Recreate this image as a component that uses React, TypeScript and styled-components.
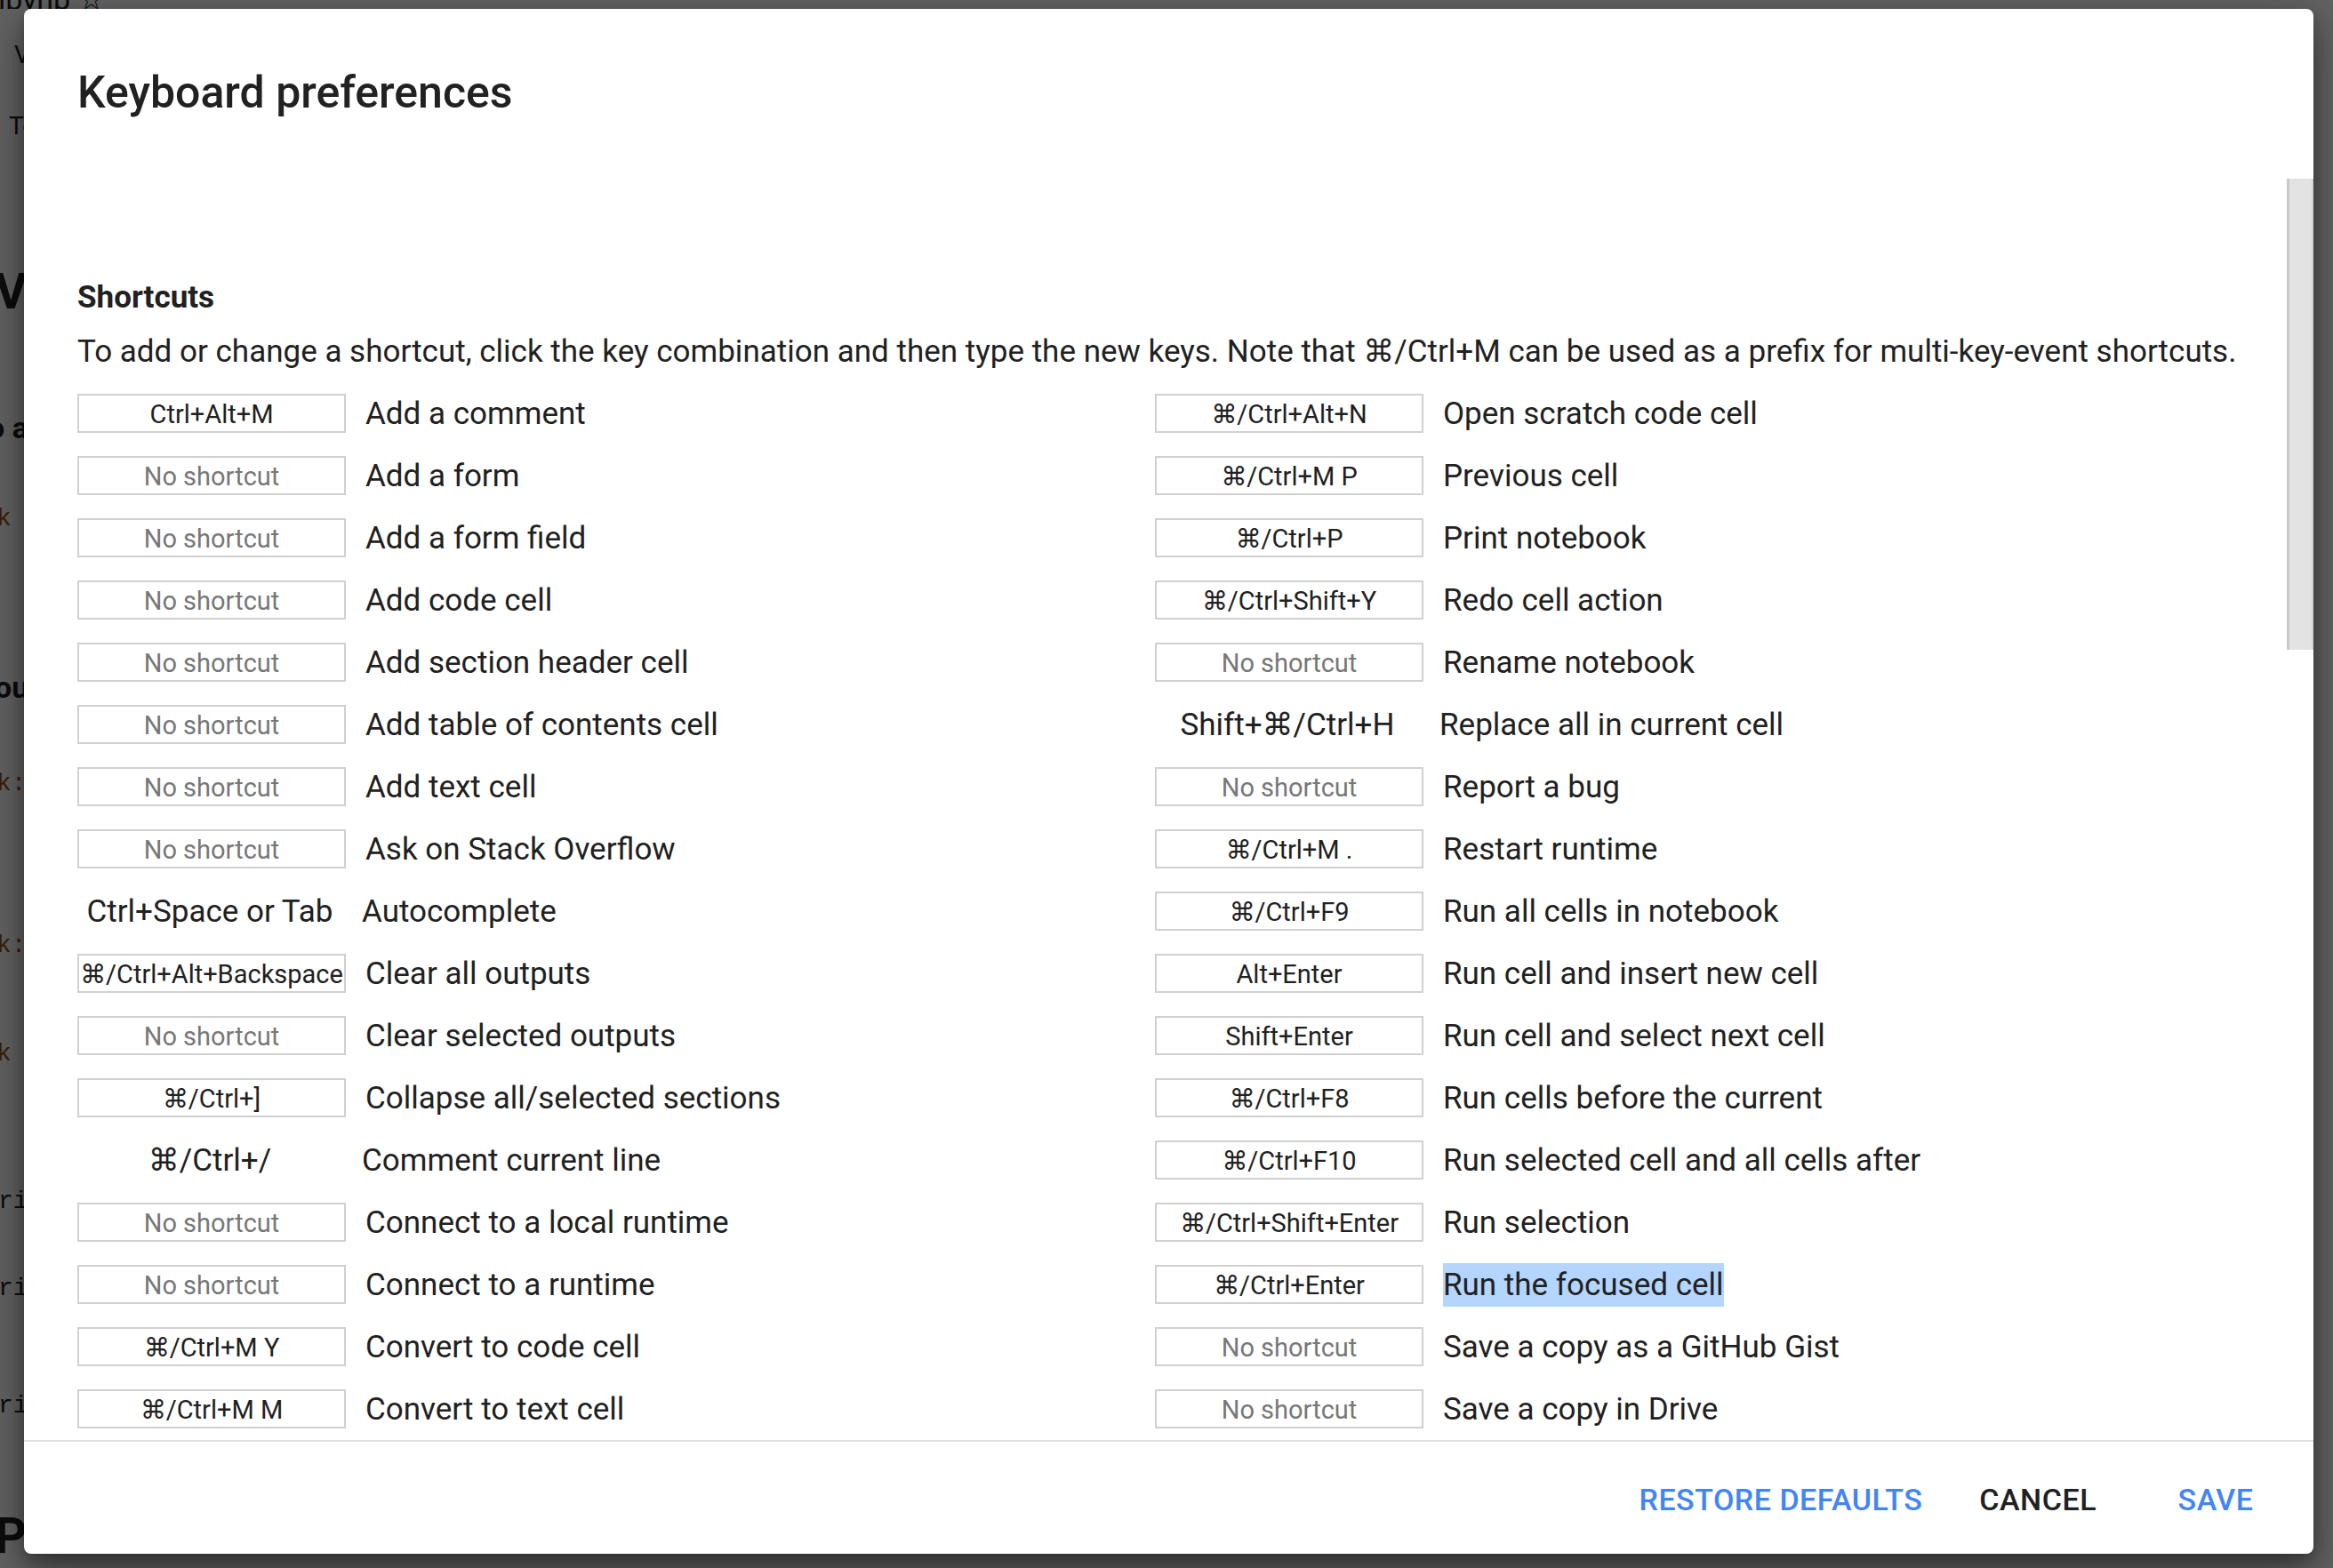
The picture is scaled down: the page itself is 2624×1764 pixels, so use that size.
import React from "react";
import styled, { createGlobalStyle } from "styled-components";

const GlobalStyle = createGlobalStyle`
  html, body {
    margin: 0;
    padding: 0;
  }
  body {
    width: 2624px;
    height: 1764px;
    overflow: hidden;
    font-family: Roboto, "DejaVu Sans", sans-serif;
  }
`;

const Screen = styled.div`
  position: relative;
  width: 2624px;
  height: 1764px;
  overflow: hidden;
  background: #ffffff;
`;

// the notebook that sits behind the dimmed backdrop; only slivers show
const NotebookPage = styled.div`
  display: flex;
  flex-direction: column;
`;

const TopStrip = styled.div`
  height: 10px;
  overflow: hidden;
`;

const SideStrip = styled.div`
  width: 27px;
  padding-top: 38px;
  overflow: hidden;
  display: flex;
  flex-direction: column;
`;

const PageLine = styled.div<{
  $h: number;
  $x: number;
  $size: number;
  $bold?: boolean;
  $mono?: boolean;
  $tint?: string;
}>`
  flex-shrink: 0;
  height: ${(p) => p.$h}px;
  margin-left: ${(p) => p.$x}px;
  font-family: ${(p) =>
    p.$mono ? '"Liberation Mono", monospace' : 'Roboto, "DejaVu Sans", sans-serif'};
  font-size: ${(p) => p.$size}px;
  font-weight: ${(p) => (p.$bold ? 700 : 400)};
  line-height: ${(p) => p.$size}px;
  color: ${(p) => p.$tint || "#202124"};
  white-space: nowrap;
`;

const FileName = styled.div`
  margin: -18px 0 0 -2px;
  font-size: 34px;
  line-height: 34px;
  color: #202124;
  white-space: nowrap;
`;

const Backdrop = styled.div`
  position: absolute;
  inset: 0;
  background: rgba(0, 0, 0, 0.62);
  display: flex;
  align-items: flex-start;
  padding: 10px 0 0 27px;
  box-sizing: border-box;
`;

const Dialog = styled.div`
  width: 2575px;
  height: 1738px;
  background: #ffffff;
  border-radius: 8px;
  display: flex;
  flex-direction: column;
  overflow: hidden;
  box-shadow: 0 18px 44px rgba(0, 0, 0, 0.45), 0 6px 14px rgba(0, 0, 0, 0.2);
`;

const Header = styled.div`
  flex-shrink: 0;
  height: 191px;
  padding: 64px 60px 0;
  box-sizing: border-box;
`;

const Title = styled.h1`
  margin: 0;
  font-size: 50px;
  font-weight: 500;
  line-height: 1.2;
  color: #212121;
`;

const Body = styled.div`
  position: relative;
  flex: 1;
  overflow: hidden;
  padding: 113px 91px 0 60px;
`;

const SectionTitle = styled.h2`
  margin: 0;
  font-size: 35px;
  font-weight: 700;
  line-height: 1.2;
  color: #212121;
`;

const Intro = styled.p`
  margin: 19px 0 13px;
  font-size: 35px;
  line-height: 1.2;
  color: #212121;
  white-space: nowrap;
`;

const Columns = styled.div`
  display: grid;
  grid-template-columns: 1fr 1fr;
`;

const ShortcutList = styled.div`
  display: flex;
  flex-direction: column;
`;

const Row = styled.div`
  height: 70px;
  display: flex;
  align-items: center;
`;

const KeyBox = styled.div<{ $empty?: boolean }>`
  box-sizing: border-box;
  width: 302px;
  height: 44px;
  flex-shrink: 0;
  border: 2px solid #d0d0d0;
  display: flex;
  align-items: center;
  justify-content: center;
  padding-top: 2px;
  font-size: 29px;
  color: ${(p) => (p.$empty ? "#777777" : "#212121")};
  white-space: nowrap;
`;

const KeyText = styled.div`
  width: 298px;
  flex-shrink: 0;
  text-align: center;
  font-size: 35px;
  color: #212121;
  white-space: nowrap;
`;

const Action = styled.span<{ $selected?: boolean }>`
  margin-left: 22px;
  font-size: 35px;
  line-height: 49px;
  color: #212121;
  white-space: nowrap;
  background: ${(p) => (p.$selected ? "#b4d5fe" : "transparent")};
`;

const ScrollThumb = styled.div`
  position: absolute;
  top: 0;
  right: 0;
  width: 30px;
  height: 530px;
  box-sizing: border-box;
  background: #e3e3e3;
  border-left: 3px solid #c9c9c9;
  border-right: 2px solid #d4d4d4;
`;

const Footer = styled.div`
  flex-shrink: 0;
  height: 128px;
  box-sizing: border-box;
  border-top: 2px solid #e0e0e0;
  display: flex;
  justify-content: flex-end;
  align-items: center;
  gap: 32px;
  padding: 4px 24px 0 0;
`;

const FooterButton = styled.button<{ $primary?: boolean; $wide?: boolean }>`
  background: none;
  border: 0;
  padding: 0 16px;
  min-width: ${(p) => (p.$wide ? 172 : 128)}px;
  height: 72px;
  font-family: Roboto, sans-serif;
  font-size: 34px;
  font-weight: 500;
  letter-spacing: 0.5px;
  text-transform: uppercase;
  color: ${(p) => (p.$primary ? "#4285f4" : "#212121")};
  cursor: pointer;
`;

type Shortcut = {
  keys: string | null;
  action: string;
  plain?: boolean;
  selected?: boolean;
};

const leftShortcuts: Shortcut[] = [
  { keys: "Ctrl+Alt+M", action: "Add a comment" },
  { keys: null, action: "Add a form" },
  { keys: null, action: "Add a form field" },
  { keys: null, action: "Add code cell" },
  { keys: null, action: "Add section header cell" },
  { keys: null, action: "Add table of contents cell" },
  { keys: null, action: "Add text cell" },
  { keys: null, action: "Ask on Stack Overflow" },
  { keys: "Ctrl+Space or Tab", action: "Autocomplete", plain: true },
  { keys: "⌘/Ctrl+Alt+Backspace", action: "Clear all outputs" },
  { keys: null, action: "Clear selected outputs" },
  { keys: "⌘/Ctrl+]", action: "Collapse all/selected sections" },
  { keys: "⌘/Ctrl+/", action: "Comment current line", plain: true },
  { keys: null, action: "Connect to a local runtime" },
  { keys: null, action: "Connect to a runtime" },
  { keys: "⌘/Ctrl+M Y", action: "Convert to code cell" },
  { keys: "⌘/Ctrl+M M", action: "Convert to text cell" },
];

const rightShortcuts: Shortcut[] = [
  { keys: "⌘/Ctrl+Alt+N", action: "Open scratch code cell" },
  { keys: "⌘/Ctrl+M P", action: "Previous cell" },
  { keys: "⌘/Ctrl+P", action: "Print notebook" },
  { keys: "⌘/Ctrl+Shift+Y", action: "Redo cell action" },
  { keys: null, action: "Rename notebook" },
  { keys: "Shift+⌘/Ctrl+H", action: "Replace all in current cell", plain: true },
  { keys: null, action: "Report a bug" },
  { keys: "⌘/Ctrl+M .", action: "Restart runtime" },
  { keys: "⌘/Ctrl+F9", action: "Run all cells in notebook" },
  { keys: "Alt+Enter", action: "Run cell and insert new cell" },
  { keys: "Shift+Enter", action: "Run cell and select next cell" },
  { keys: "⌘/Ctrl+F8", action: "Run cells before the current" },
  { keys: "⌘/Ctrl+F10", action: "Run selected cell and all cells after" },
  { keys: "⌘/Ctrl+Shift+Enter", action: "Run selection" },
  { keys: "⌘/Ctrl+Enter", action: "Run the focused cell", selected: true },
  { keys: null, action: "Save a copy as a GitHub Gist" },
  { keys: null, action: "Save a copy in Drive" },
];

type Fragment = {
  text: string;
  h: number;
  x: number;
  size: number;
  bold?: boolean;
  mono?: boolean;
  tint?: string;
};

const BROWN = "#9c4f12";

const pageFragments: Fragment[] = [
  { text: "View", h: 80, x: 16, size: 28 },
  { text: "Text", h: 172, x: 10, size: 28 },
  { text: "V", h: 164, x: -6, size: 56, bold: true },
  { text: "o a", h: 106, x: -14, size: 34, bold: true },
  { text: "k", h: 186, x: -4, size: 28, mono: true, tint: BROWN },
  { text: "ou", h: 112, x: -6, size: 34, bold: true },
  { text: "k:", h: 182, x: -4, size: 28, mono: true, tint: BROWN },
  { text: "k:", h: 122, x: -4, size: 28, mono: true, tint: BROWN },
  { text: "k", h: 166, x: -4, size: 28, mono: true, tint: BROWN },
  { text: "ri", h: 98, x: -2, size: 28, mono: true },
  { text: "ri", h: 132, x: -2, size: 28, mono: true },
  { text: "ri", h: 132, x: -2, size: 28, mono: true },
  { text: "P", h: 60, x: -6, size: 56, bold: true },
];

const ShortcutRow: React.FC<{ item: Shortcut }> = ({ item }) => (
  <Row>
    {item.plain ? (
      <KeyText>{item.keys}</KeyText>
    ) : (
      <KeyBox $empty={!item.keys}>{item.keys ?? "No shortcut"}</KeyBox>
    )}
    <Action $selected={item.selected}>{item.action}</Action>
  </Row>
);

const App: React.FC = () => {
  return (
    <Screen>
      <GlobalStyle />
      <NotebookPage>
        <TopStrip>
          <FileName>ipynb ☆</FileName>
        </TopStrip>
        <SideStrip>
          {pageFragments.map((f, i) => (
            <PageLine
              key={i}
              $h={f.h}
              $x={f.x}
              $size={f.size}
              $bold={f.bold}
              $mono={f.mono}
              $tint={f.tint}
            >
              {f.text}
            </PageLine>
          ))}
        </SideStrip>
      </NotebookPage>
      <Backdrop>
        <Dialog>
          <Header>
            <Title>Keyboard preferences</Title>
          </Header>
          <Body>
            <SectionTitle>Shortcuts</SectionTitle>
            <Intro>
              To add or change a shortcut, click the key combination and then type the new
              keys. Note that ⌘/Ctrl+M can be used as a prefix for multi-key-event shortcuts.
            </Intro>
            <Columns>
              <ShortcutList>
                {leftShortcuts.map((s) => (
                  <ShortcutRow key={s.action} item={s} />
                ))}
              </ShortcutList>
              <ShortcutList>
                {rightShortcuts.map((s) => (
                  <ShortcutRow key={s.action} item={s} />
                ))}
              </ShortcutList>
            </Columns>
            <ScrollThumb />
          </Body>
          <Footer>
            <FooterButton $primary>Restore defaults</FooterButton>
            <FooterButton>Cancel</FooterButton>
            <FooterButton $primary $wide>
              Save
            </FooterButton>
          </Footer>
        </Dialog>
      </Backdrop>
    </Screen>
  );
};

export default App;
